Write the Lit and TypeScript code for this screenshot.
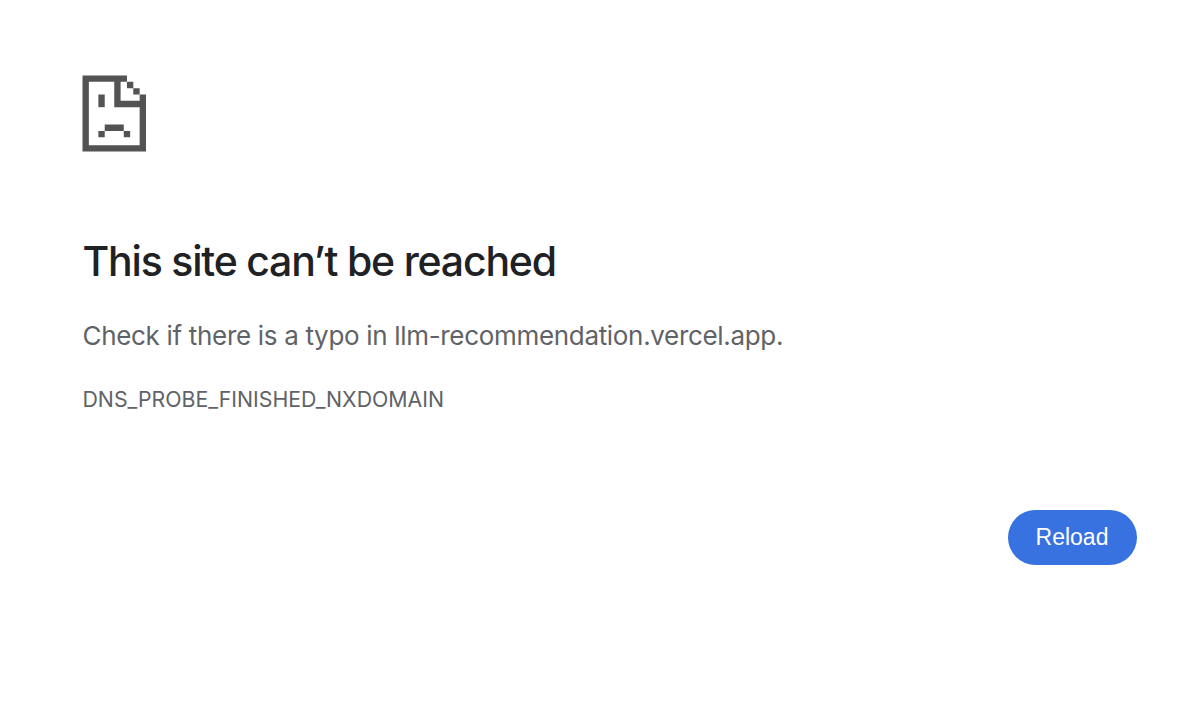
import {LitElement, css, html} from 'lit';
import {customElement, property} from 'lit/decorators.js';

@customElement('sad-page-icon')
export class SadPageIcon extends LitElement {
  static styles = css`
    :host {
      display: block;
      width: 64px;
      height: 77px;
    }

    svg {
      display: block;
      width: 100%;
      height: 100%;
      fill: #535353;
    }
  `;

  render() {
    return html`
      <svg viewBox="-0.16 -0.16 20.16 24.32" preserveAspectRatio="none">
        <path
          d="M0 0H14V2H16V4H18V6H20V24H0ZM2 2V22H18V10H10V2ZM12 2V8H18V6H16V4H14V2Z"
          fill-rule="evenodd"
        />
        <path d="M5 6h2v4h-2z" />
        <path d="M7 15.5h6v2h-6zM5 17.5h2v2h-2zM13 17.5h2v2h-2z" />
      </svg>
    `;
  }
}

@customElement('app-root')
export class AppRoot extends LitElement {
  @property() hostName = 'llm-recommendation.vercel.app';
  @property() errorCode = 'DNS_PROBE_FINISHED_NXDOMAIN';

  static styles = css`
    :host {
      display: block;
      box-sizing: border-box;
      min-height: 715px;
      padding: 75px 63.5px 0 82.5px;
      background: #fff;
      color: #5f6368;
      font-family: Inter, sans-serif;
    }

    sad-page-icon {
      margin-left: -0.5px;
    }

    h1 {
      margin: 83px 0 0;
      color: #202124;
      font-size: 41px;
      font-weight: 550;
      line-height: 52px;
      letter-spacing: -1.2px;
      white-space: nowrap;
    }

    .summary {
      margin: 29px 0 0;
      font-size: 26px;
      line-height: 40px;
      letter-spacing: -0.32px;
      white-space: nowrap;
    }

    .error-code {
      margin-top: 28px;
      font-size: 21.3px;
      line-height: 30px;
    }

    .buttons {
      display: flex;
      justify-content: flex-end;
      margin-top: 96px;
    }

    button {
      width: 129px;
      height: 55px;
      padding: 0;
      border: 0;
      border-radius: 28px;
      background: #3871e0;
      color: #fff;
      font: 23px 'Liberation Sans', Arial, sans-serif;
      cursor: pointer;
    }
  `;

  private _reload() {
    window.location.reload();
  }

  render() {
    return html`
      <sad-page-icon></sad-page-icon>
      <h1>This site can’t be reached</h1>
      <p class="summary">Check if there is a typo in ${this.hostName}.</p>
      <div class="error-code">${this.errorCode}</div>
      <div class="buttons">
        <button @click=${this._reload}>Reload</button>
      </div>
    `;
  }
}
